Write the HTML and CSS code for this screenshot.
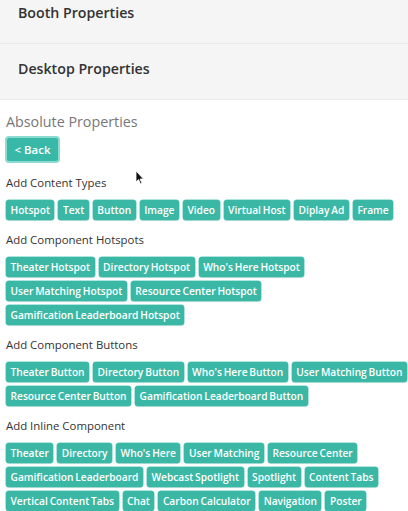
FILE: index.html
```html
<!DOCTYPE html>
<html>
<head>
<meta charset="utf-8">
<link rel="stylesheet" href="styles.css">
</head>
<body>
<div class="panel panel-first"><span class="panel-title">Booth Properties</span></div>
<div class="panel"><span class="panel-title">Desktop Properties</span></div>
<div class="content">
  <h2 class="heading">Absolute Properties</h2>
  <button class="back">&lt; Back</button>
  <div class="group">
    <div class="label">Add Content Types</div>
    <div class="chips">
      <span class="chip">Hotspot</span><span class="chip">Text</span><span class="chip">Button</span><span class="chip">Image</span><span class="chip">Video</span><span class="chip">Virtual Host</span><span class="chip">Diplay Ad</span><span class="chip">Frame</span>
    </div>
  </div>
  <div class="group">
    <div class="label">Add Component Hotspots</div>
    <div class="chips">
      <span class="chip">Theater Hotspot</span><span class="chip">Directory Hotspot</span><span class="chip">Who's Here Hotspot</span><span class="chip">User Matching Hotspot</span><span class="chip">Resource Center Hotspot</span><span class="chip">Gamification Leaderboard Hotspot</span>
    </div>
  </div>
  <div class="group">
    <div class="label">Add Component Buttons</div>
    <div class="chips">
      <span class="chip">Theater Button</span><span class="chip">Directory Button</span><span class="chip">Who's Here Button</span><span class="chip">User Matching Button</span><span class="chip">Resource Center Button</span><span class="chip">Gamification Leaderboard Button</span>
    </div>
  </div>
  <div class="group">
    <div class="label">Add Inline Component</div>
    <div class="chips">
      <span class="chip">Theater</span><span class="chip">Directory</span><span class="chip">Who's Here</span><span class="chip">User Matching</span><span class="chip">Resource Center</span><span class="chip">Gamification Leaderboard</span><span class="chip">Webcast Spotlight</span><span class="chip">Spotlight</span><span class="chip">Content Tabs</span><span class="chip">Vertical Content Tabs</span><span class="chip">Chat</span><span class="chip">Carbon Calculator</span><span class="chip">Navigation</span><span class="chip">Poster</span>
    </div>
  </div>
</div>
<svg class="cursor" width="10" height="15" viewBox="0 0 10 15"><path d="M1 1 L1 12 L3.5 9.5 L5.5 14 L7 13.3 L5 9 L8.5 9 Z" fill="#111" stroke="#fff" stroke-width="0.8"/></svg>
</body>
</html>
```
FILE: styles.css
```css
html, body {
  margin: 0;
  padding: 0;
  background: #fff;
  font-family: "Open Sans", "Liberation Sans", sans-serif;
  overflow: hidden;
}
body {
  position: relative;
  width: 408px;
  height: 511px;
}
.panel {
  height: 56px;
  background: #f5f5f5;
  border-bottom: 1px solid #ebebeb;
  display: flex;
  align-items: center;
  padding: 0 0 7px 18px;
  box-sizing: border-box;
}
.panel-first {
  margin-top: -13px;
  height: 57px;
  padding-bottom: 5px;
}
.panel-title {
  font-size: 14.2px;
  font-weight: 600;
  color: #333;
}
.content {
  padding: 9px 0 0 6px;
  display: flex;
  flex-direction: column;
}
.heading {
  margin: 0;
  font-size: 14.3px;
  font-weight: 400;
  color: #777;
  line-height: 26px;
}
.back {
  align-self: flex-start;
  margin-top: 1px;
  margin-left: -1px;
  width: 55px;
  height: 27px;
  border: 2px solid #8ddbd0;
  border-radius: 4px;
  background: #38b8a6;
  color: #fff;
  font-family: inherit;
  font-size: 11.5px;
  font-weight: 600;
  padding: 0;
}
.group {
  margin-top: 12px;
}
.label {
  font-size: 11.4px;
  color: #333;
  line-height: 16px;
  margin-bottom: 9px;
}
.chips {
  display: flex;
  flex-wrap: wrap;
  gap: 4px 4px;
  margin-right: -6px;
}
.chip {
  background: #3ab8a5;
  color: #fff;
  font-size: 10.2px;
  font-weight: 600;
  word-spacing: -0.8px;
  line-height: 20px;
  height: 20px;
  padding: 0 4.5px;
  border-radius: 3px;
  box-shadow: 0 0 0 0.5px #5fcbbb, 0 1px 1px rgba(0,0,0,0.12);
  white-space: nowrap;
}
.cursor {
  position: absolute;
  left: 135px;
  top: 170px;
}
```
